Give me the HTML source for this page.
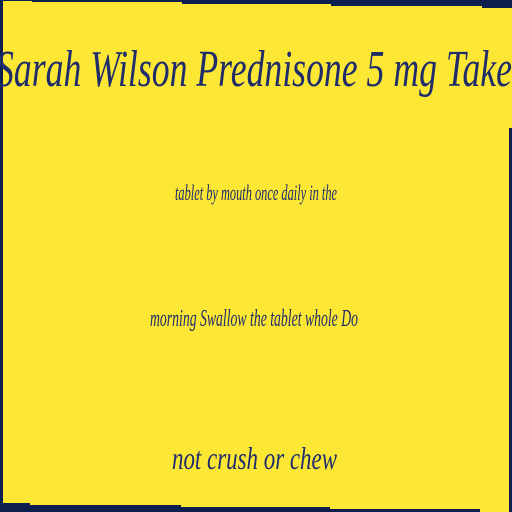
<!DOCTYPE html>
<html><head><style>
html,body{margin:0;padding:0}
body{width:512px;height:512px;background:#fde735;position:relative;overflow:hidden;font-family:"Liberation Serif",serif;font-style:italic;color:#1f2c6a}
.b{position:absolute;background:#0c1f4e}
.t{position:absolute;white-space:nowrap;transform-origin:left top}
</style></head><body>
<div class="b" style="left:0;top:0;width:3px;height:512px"></div>
<div class="b" style="left:0;top:0;width:32px;height:1px"></div>
<div class="b" style="left:32px;top:0;width:150px;height:2px"></div>
<div class="b" style="left:182px;top:0;width:149px;height:4px"></div>
<div class="b" style="left:331px;top:0;width:151px;height:6px"></div>
<div class="b" style="left:482px;top:0;width:30px;height:8px"></div>
<div class="b" style="left:509px;top:128px;width:3px;height:384px"></div>
<div class="b" style="left:0;top:503px;width:30px;height:9px"></div>
<div class="b" style="left:30px;top:505px;width:151px;height:7px"></div>
<div class="b" style="left:181px;top:507px;width:149px;height:5px"></div>
<div class="b" style="left:330px;top:509px;width:150px;height:3px"></div>

<div class="t" id="a" style="left:-4px;top:40px;font-size:52px">Sarah Wilson Prednisone 5 mg Take</div>
<div class="t" id="b" style="left:175px;top:180px;font-size:22px">tablet by mouth once daily in the</div>
<div class="t" id="c" style="left:150px;top:306px;font-size:24px">morning Swallow the tablet whole Do</div>
<div class="t" id="d" style="left:172px;top:440px;font-size:32px">not crush or chew</div>
<script>
[["a",516],["b",162],["c",208],["d",165]].forEach(function(p){var e=document.getElementById(p[0]);var w=e.getBoundingClientRect().width;e.style.transform="scaleX("+(p[1]/w)+")";});
</script>
</body></html>
